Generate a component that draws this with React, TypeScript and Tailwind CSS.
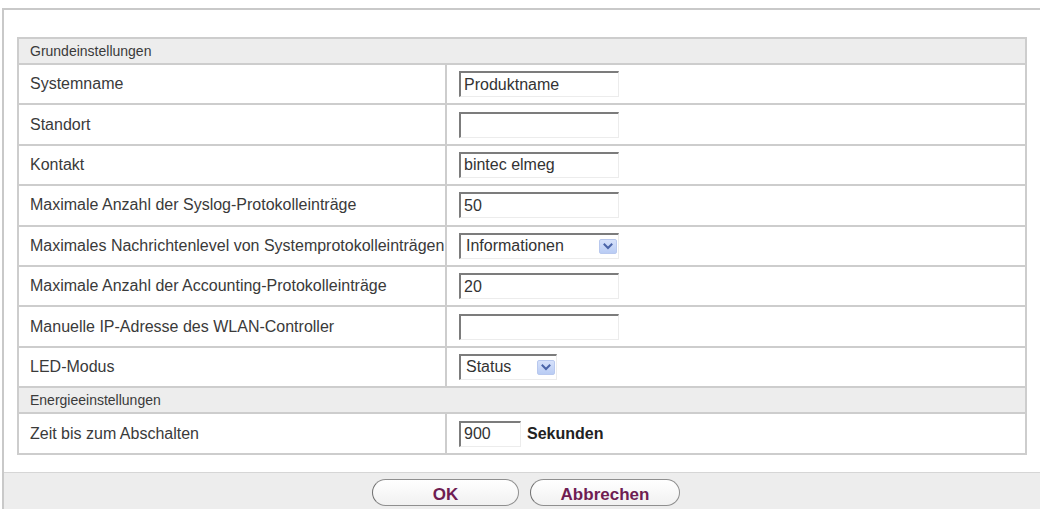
import React from "react";

const font = { fontFamily: '"Liberation Sans", Arial, Helvetica, sans-serif' };

function TextInput({ value, width }: { value: string; width: string }) {
  return (
    <div
      className={`${width} h-[26px] flex items-center border-t-2 border-l-2 border-r border-b border-t-[#7c7c7c] border-l-[#7c7c7c] border-r-[#ececec] border-b-[#ececec] bg-white pl-[3px] text-[16px] leading-none text-[#333]`}
    >
      {value}
    </div>
  );
}

function Chevron() {
  return (
    <div className="w-[18px] h-[15px] rounded-[2px] border border-[#b8c8ee] bg-gradient-to-b from-[#d6e1fa] to-[#b9ccf4] flex items-center justify-center">
      <svg width="10" height="7" viewBox="0 0 10 7">
        <path d="M1.5 1.5 L5 5 L8.5 1.5" fill="none" stroke="#4a64a8" strokeWidth="2" strokeLinecap="square" />
      </svg>
    </div>
  );
}

function SelectBox({ value, width }: { value: string; width: string }) {
  return (
    <div
      className={`${width} h-[26px] flex items-center justify-between border-t-2 border-l-2 border-r border-b border-t-[#7c7c7c] border-l-[#7c7c7c] border-r-[#ececec] border-b-[#ececec] bg-white pl-[5px] pr-[1px] text-[16px] leading-none text-[#333]`}
    >
      <span>{value}</span>
      <Chevron />
    </div>
  );
}

function Row({ label, children, last }: { label: string; children: React.ReactNode; last?: boolean }) {
  return (
    <div className={`flex ${last ? "h-[39px]" : "h-[40.4px] border-b-2 border-[#cdcdcd]"}`}>
      <div className="w-[428px] shrink-0 border-r-2 border-[#cdcdcd] flex items-center pl-[11px] text-[16px] text-[#3a3a3a] whitespace-nowrap">
        {label}
      </div>
      <div className="flex-1 flex items-center pl-[12px]">{children}</div>
    </div>
  );
}

function Header({ label, h }: { label: string; h: string }) {
  return (
    <div className={`${h} bg-[#ededed] border-b-2 border-[#cdcdcd] flex items-center pl-[11px] text-[14px] text-[#3a3a3a]`}>
      {label}
    </div>
  );
}

function PillButton({ label, width }: { label: string; width: string }) {
  return (
    <div
      className={`${width} h-[27px] rounded-full border border-[#8f8f8f] border-l-[#6f6f6f] bg-gradient-to-b from-white to-[#f1f1f1] flex items-center justify-center text-[17px] font-bold text-[#6f1d52] leading-none pt-[3px]`}
    >
      {label}
    </div>
  );
}

export default function App() {
  return (
    <div className="w-[1040px] h-[509px] overflow-hidden bg-white" style={font}>
      <div className="mt-[8px] ml-[2px] h-[501px] border-t-2 border-l-2 border-[#c9c9c9] flex flex-col">
        <div className="pl-[13px] pt-[27px]">
          <div className="w-[1010px] border-2 border-[#cdcdcd]">
            <Header label="Grundeinstellungen" h="h-[26px]" />
            <Row label="Systemname">
              <TextInput value="Produktname" width="w-[160px]" />
            </Row>
            <Row label="Standort">
              <TextInput value="" width="w-[160px]" />
            </Row>
            <Row label="Kontakt">
              <TextInput value="bintec elmeg" width="w-[160px]" />
            </Row>
            <Row label="Maximale Anzahl der Syslog-Protokolleinträge">
              <TextInput value="50" width="w-[160px]" />
            </Row>
            <Row label="Maximales Nachrichtenlevel von Systemprotokolleinträgen">
              <SelectBox value="Informationen" width="w-[160px]" />
            </Row>
            <Row label="Maximale Anzahl der Accounting-Protokolleinträge">
              <TextInput value="20" width="w-[160px]" />
            </Row>
            <Row label="Manuelle IP-Adresse des WLAN-Controller">
              <TextInput value="" width="w-[160px]" />
            </Row>
            <Row label="LED-Modus">
              <SelectBox value="Status" width="w-[98px]" />
            </Row>
            <Header label="Energieeinstellungen" h="h-[26px]" />
            <Row label="Zeit bis zum Abschalten" last>
              <div className="flex items-center gap-[6px]">
                <TextInput value="900" width="w-[62px]" />
                <span className="text-[16px] font-bold text-[#222]">Sekunden</span>
              </div>
            </Row>
          </div>
        </div>
        <div className="mt-[17px] flex-1 border-t border-[#d6d6d6] bg-[#ededed] flex justify-center gap-[11px] pt-[6px] pl-[8px]">
          <PillButton label="OK" width="w-[147px]" />
          <PillButton label="Abbrechen" width="w-[150px]" />
        </div>
      </div>
    </div>
  );
}
